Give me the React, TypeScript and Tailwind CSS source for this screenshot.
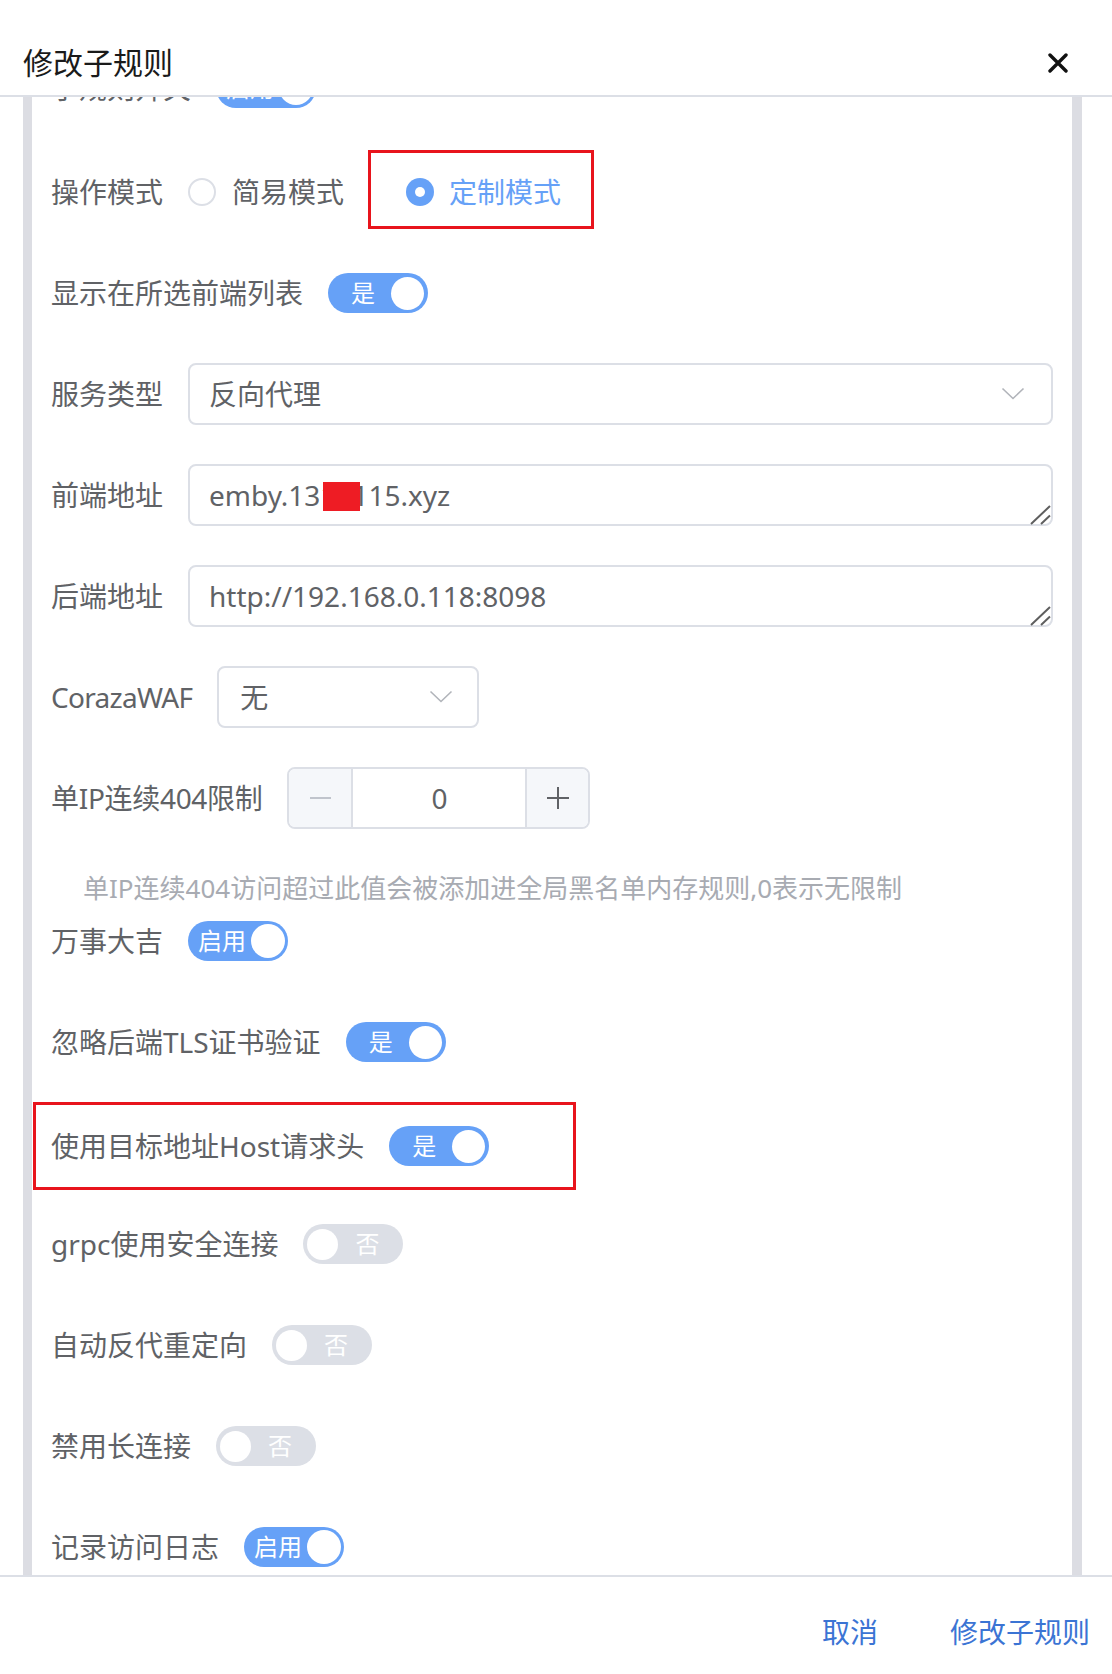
import React from 'react'

const label = 'text-[28px] text-[#606266] mr-[25px] whitespace-nowrap leading-[40px]'

function Switch({ on, text }: { on: boolean; text: string }) {
  if (!on) {
    return (
      <div className="flex items-center h-[40px] w-[100px] rounded-full bg-[#dcdfe6] pl-[4px] shrink-0">
        <span className="h-[31px] w-[31px] rounded-full bg-white" />
        <span className="ml-[17px] text-[24px] leading-none text-white">{text}</span>
      </div>
    )
  }
  const wide = text.length > 1
  return (
    <div
      className={
        'flex items-center h-[40px] w-[100px] rounded-full bg-[#66a1f7] shrink-0 ' +
        (wide ? 'pl-[10px] pr-[3px]' : 'pl-[23px] pr-[4px]')
      }
    >
      <span className="text-[24px] leading-none text-white">{text}</span>
      <span className={'ml-auto rounded-full bg-white ' + (wide ? 'h-[34px] w-[34px]' : 'h-[33px] w-[33px]')} />
    </div>
  )
}

function Chevron() {
  return (
    <svg width="24" height="14" viewBox="0 0 24 14" fill="none" className="shrink-0">
      <path d="M1.5 1.5 L12 11.5 L22.5 1.5" stroke="#b1b4ba" strokeWidth="1.6" />
    </svg>
  )
}

function Grip() {
  return (
    <svg width="22" height="20" viewBox="0 0 22 20" className="absolute right-[1px] bottom-[1px] pointer-events-none">
      <path d="M1 19 L20 1 M11 19 L20 10.5" stroke="#5f5f5f" strokeWidth="2" />
    </svg>
  )
}

function Row({ children }: { children: React.ReactNode }) {
  return <div className="flex items-center h-[62px] shrink-0">{children}</div>
}

function SwitchRow({ text, on, value }: { text: string; on: boolean; value: string }) {
  return (
    <Row>
      <span className={label}>{text}</span>
      <Switch on={on} text={value} />
    </Row>
  )
}

const area =
  'block w-full h-[62px] resize-none overflow-hidden border-2 border-[#dcdfe6] rounded-[8px] px-[19px] py-[8px] text-[28px] leading-[42px] text-[#606266] outline-none'

export default function App() {
  return (
    <div className="w-[1112px] h-[1674px] flex flex-col bg-white overflow-hidden font-['Noto_Sans','Noto_Sans_CJK_SC',sans-serif]">
      <header className="h-[97px] shrink-0 flex items-center justify-between pt-[30px] pl-[23px] pr-[44px] border-b-2 border-[#dcdfe6]">
        <h1 className="text-[30px] leading-[42px] text-[#1a1a1a]">修改子规则</h1>
        <svg width="20" height="20" viewBox="0 0 20 20">
          <path d="M2 2 L18 18 M18 2 L2 18" stroke="#111" strokeWidth="3.4" strokeLinecap="round" />
        </svg>
      </header>

      <div className="flex-1 overflow-hidden ml-[23px] mr-[30px] border-l-[9px] border-r-[10px] border-[#dcdde3]">
        <div className="-mt-[40px] px-[19px] flex flex-col gap-[39px]">
          <div className="mb-[3px]">
            <SwitchRow text="子规则开关" on value="启用" />
          </div>

          <Row>
            <span className={label}>操作模式</span>
            <span className="h-[28px] w-[28px] rounded-full border-2 border-[#dcdfe6] shrink-0" />
            <span className="ml-[16px] text-[28px] text-[#606266]">简易模式</span>
            <div className="ml-[24px] -mt-[6px] h-[79px] flex items-center border-[3px] border-[#e8141c] pt-[5px] pl-[35px] pr-[30px]">
              <span className="h-[28px] w-[28px] rounded-full bg-[#66a1f7] flex items-center justify-center shrink-0">
                <span className="h-[10px] w-[10px] rounded-full bg-white" />
              </span>
              <span className="ml-[15px] text-[28px] text-[#66a1f7]">定制模式</span>
            </div>
          </Row>

          <SwitchRow text="显示在所选前端列表" on value="是" />

          <Row>
            <span className={label}>服务类型</span>
            <div className="flex-1 h-[62px] flex items-center border-2 border-[#dcdfe6] rounded-[8px] pl-[19px] pr-[26px]">
              <span className="flex-1 text-[28px] text-[#606266]">反向代理</span>
              <Chevron />
            </div>
          </Row>

          <Row>
            <span className={label}>前端地址</span>
            <div className="relative flex-1 h-[62px]">
              <textarea readOnly defaultValue="emby.1311115.xyz" className={area} />
              <span className="absolute left-[135px] top-[18px] h-[29px] w-[37px] bg-[#ee1c24]" />
              <Grip />
            </div>
          </Row>

          <Row>
            <span className={label}>后端地址</span>
            <div className="relative flex-1 h-[62px]">
              <textarea readOnly defaultValue="http://192.168.0.118:8098" className={area} />
              <Grip />
            </div>
          </Row>

          <Row>
            <span className={label + ' tracking-[-0.7px]'}>CorazaWAF</span>
            <div className="w-[262px] h-[62px] flex items-center border-2 border-[#dcdfe6] rounded-[8px] pl-[21px] pr-[24px]">
              <span className="flex-1 text-[28px] text-[#606266]">无</span>
              <Chevron />
            </div>
          </Row>

          <div className="flex flex-col">
            <Row>
              <span className={label + ' tracking-[-0.3px]'}>单IP连续404限制</span>
              <div className="w-[303px] h-[62px] flex border-2 border-[#dcdfe6] rounded-[8px] overflow-hidden">
                <div className="w-[64px] bg-[#f5f7fa] border-r-2 border-[#dcdfe6] flex items-center justify-center">
                  <span className="w-[21px] h-[2px] bg-[#c0c4cc]" />
                </div>
                <div className="flex-1 flex items-center justify-center text-[28px] text-[#606266]">0</div>
                <div className="w-[63px] bg-[#f5f7fa] border-l-2 border-[#dcdfe6] flex items-center justify-center">
                  <svg width="22" height="22" viewBox="0 0 22 22">
                    <path d="M11 0 V22 M0 11 H22" stroke="#606266" strokeWidth="2" />
                  </svg>
                </div>
              </div>
            </Row>
            <p className="mt-[40px] -mb-[36px] h-[38px] leading-[38px] pl-[32px] text-[26px] text-[#a8abb2] whitespace-nowrap">
              单IP连续404访问超过此值会被添加进全局黑名单内存规则,0表示无限制
            </p>
          </div>

          <SwitchRow text="万事大吉" on value="启用" />
          <SwitchRow text="忽略后端TLS证书验证" on value="是" />

          <div className="-ml-[18px] w-[543px] border-[3px] border-[#e8141c] pl-[15px] py-[10px] -mt-[10px] -mb-[16px]">
            <SwitchRow text="使用目标地址Host请求头" on value="是" />
          </div>

          <SwitchRow text="grpc使用安全连接" on={false} value="否" />
          <SwitchRow text="自动反代重定向" on={false} value="否" />
          <SwitchRow text="禁用长连接" on={false} value="否" />
          <SwitchRow text="记录访问日志" on value="启用" />
          <SwitchRow text="记录错误日志" on value="启用" />
        </div>
      </div>

      <footer className="h-[99px] shrink-0 border-t-2 border-[#dcdfe6] flex items-center justify-end gap-[72px] pt-[12px] pr-[22px]">
        <button className="text-[28px] leading-[40px] text-[#3b74d4]">取消</button>
        <button className="text-[28px] leading-[40px] text-[#3b74d4]">修改子规则</button>
      </footer>
    </div>
  )
}
